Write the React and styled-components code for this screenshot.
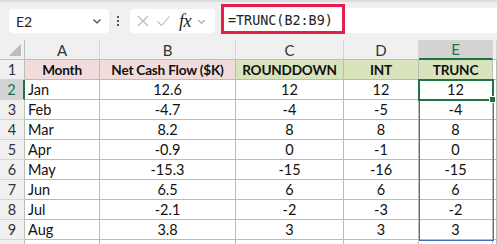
import React from 'react';
import styled, { createGlobalStyle, css } from 'styled-components';

const GlobalStyle = createGlobalStyle`
  body {
    margin: 0;
    background: #fff;
    font-family: Lato, "Liberation Sans", sans-serif;
  }
`;

const COLS = [25, 75, 136, 108, 75, 74, 4];
const GRID_LINE = '#bababa';

const rows = [
  ['Jan', '12.6', '12', '12', '12'],
  ['Feb', '-4.7', '-4', '-5', '-4'],
  ['Mar', '8.2', '8', '8', '8'],
  ['Apr', '-0.9', '0', '-1', '0'],
  ['May', '-15.3', '-15', '-16', '-15'],
  ['Jun', '6.5', '6', '6', '6'],
  ['Jul', '-2.1', '-2', '-3', '-2'],
  ['Aug', '3.8', '3', '3', '3'],
];

const headers = [
  { text: 'Month', tone: 'pink' },
  { text: 'Net Cash Flow ($K)', tone: 'pink' },
  { text: 'ROUNDDOWN', tone: 'green' },
  { text: 'INT', tone: 'green' },
  { text: 'TRUNC', tone: 'green' },
];

const Sheet = styled.div`
  position: relative;
  width: 497px;
  height: 244px;
  overflow: hidden;
  background: #fff;
`;

const FormulaBar = styled.div`
  display: flex;
  align-items: flex-start;
  height: 40px;
  box-sizing: border-box;
  padding-top: 7px;
  background: #f0f0f0;
  border-top: 2px solid #dcdcdc;
`;

const NameBox = styled.div`
  display: flex;
  align-items: center;
  justify-content: space-between;
  width: 100px;
  height: 24px;
  box-sizing: border-box;
  margin-left: 9px;
  padding: 0 7px 0 7px;
  background: #fff;
  border-radius: 4px;
  font-size: 14px;
  color: #222;
`;

const Dots = styled.div`
  display: flex;
  flex-direction: column;
  justify-content: center;
  gap: 2px;
  width: 4px;
  height: 24px;
  margin-left: 8px;

  span {
    width: 2px;
    height: 2px;
    background: #555;
  }
`;

const FxBox = styled.div`
  display: flex;
  align-items: center;
  gap: 6px;
  width: 85px;
  height: 24px;
  box-sizing: border-box;
  margin-left: 9px;
  padding-left: 6px;
  background: #fff;
  border-radius: 4px;
`;

const FxLabel = styled.span`
  font-family: "Liberation Serif", serif;
  font-style: italic;
  font-size: 18px;
  color: #222;
  margin-left: 2px;
  letter-spacing: -0.5px;
`;

const FormulaInput = styled.div`
  flex: 1;
  display: flex;
  align-items: center;
  height: 25px;
  margin-top: -1px;
  margin-left: 7px;
  padding-left: 6px;
  background: #fff;
  font-family: "DejaVu Sans Mono", monospace;
  font-size: 13.4px;
  color: #222;
`;

const Callout = styled.div`
  position: absolute;
  left: 221px;
  top: 4px;
  width: 124px;
  height: 30px;
  box-sizing: border-box;
  border: 3px solid #e3204b;
`;

const Grid = styled.div`
  position: relative;
  display: grid;
  grid-template-columns: ${COLS.map((c) => `${c}px`).join(' ')};
  grid-auto-rows: 20px;
`;

const Cell = styled.div`
  display: flex;
  align-items: center;
  justify-content: ${(p) => (p.$left ? 'flex-start' : 'center')};
  padding-left: ${(p) => (p.$left ? '3px' : '0')};
  box-sizing: border-box;
  border-right: 1px solid ${GRID_LINE};
  border-bottom: 1px solid ${GRID_LINE};
  font-size: 14.5px;
  color: #111;
  white-space: nowrap;
  ${(p) => p.$bold && css`
    font-weight: 700;
    font-size: 13.6px;
    letter-spacing: -0.2px;
  `}
  ${(p) => p.$tone === 'pink' && css`background: #f2dcdb;`}
  ${(p) => p.$tone === 'green' && css`background: #d8e4bc;`}
`;

const ColHead = styled.div`
  display: flex;
  align-items: center;
  justify-content: center;
  box-sizing: border-box;
  background: ${(p) => (p.$active ? '#d3d3d3' : '#f0f0f0')};
  border-right: 1px solid #d4d4d4;
  border-bottom: ${(p) => (p.$active ? '2px solid #217346' : '1px solid #bdbdbd')};
  font-size: 15px;
  color: ${(p) => (p.$active ? '#217346' : '#333')};
`;

const Corner = styled.div`
  position: relative;
  background: #f0f0f0;
  border-right: 1px solid #bdbdbd;
  border-bottom: 1px solid #bdbdbd;
  box-sizing: border-box;

  &::after {
    content: '';
    position: absolute;
    right: 3px;
    bottom: 3px;
    border-left: 12px solid transparent;
    border-bottom: 12px solid #bcbcbc;
  }
`;

const RowHead = styled.div`
  display: flex;
  align-items: center;
  justify-content: center;
  box-sizing: border-box;
  background: ${(p) => (p.$active ? '#d3d3d3' : '#f0f0f0')};
  border-right: ${(p) => (p.$active ? '2px solid #217346' : '1px solid #bdbdbd')};
  border-bottom: 1px solid #d4d4d4;
  font-size: 14.5px;
  color: ${(p) => (p.$active ? '#217346' : '#333')};
`;

const RangeOutline = styled.div`
  position: absolute;
  left: 419px;
  top: 40px;
  width: 75px;
  height: 161px;
  box-sizing: border-box;
  border: 1px solid #3c6ec4;
  pointer-events: none;
`;

const ActiveCell = styled.div`
  position: absolute;
  left: 418px;
  top: 39px;
  width: 76px;
  height: 22px;
  box-sizing: border-box;
  border: 2px solid #217346;

  &::after {
    content: '';
    position: absolute;
    right: -4px;
    bottom: -4px;
    width: 5px;
    height: 5px;
    background: #217346;
    border: 1px solid #fff;
  }
`;

const Chevron = ({ size = 10, color = '#444' }) => (
  <svg width={size} height={size} viewBox="0 0 10 10">
    <path d="M1.5 3.5 L5 7 L8.5 3.5" fill="none" stroke={color} strokeWidth="1.2" />
  </svg>
);

const CrossIcon = () => (
  <svg width="14" height="14" viewBox="0 0 14 14">
    <path d="M2 2 L12 12 M12 2 L2 12" stroke="#b8b8b8" strokeWidth="1.1" fill="none" />
  </svg>
);

const CheckIcon = () => (
  <svg width="15" height="14" viewBox="0 0 15 14">
    <path d="M1.5 7.5 L5.5 11.5 L13.5 2.5" stroke="#b8b8b8" strokeWidth="1.1" fill="none" />
  </svg>
);

const letters = ['A', 'B', 'C', 'D', 'E'];

export default function App() {
  return (
    <Sheet>
      <GlobalStyle />
      <FormulaBar>
        <NameBox>
          <span>E2</span>
          <Chevron />
        </NameBox>
        <Dots>
          <span />
          <span />
          <span />
        </Dots>
        <FxBox>
          <CrossIcon />
          <CheckIcon />
          <FxLabel>fx</FxLabel>
          <Chevron size={9} color="#999" />
        </FxBox>
        <FormulaInput>=TRUNC(B2:B9)</FormulaInput>
      </FormulaBar>
      <Callout />
      <Grid>
        <Corner />
        {letters.map((l) => (
          <ColHead key={l} $active={l === 'E'}>
            {l}
          </ColHead>
        ))}
        <ColHead />

        <RowHead>1</RowHead>
        {headers.map((h) => (
          <Cell key={h.text} $bold $tone={h.tone}>
            {h.text}
          </Cell>
        ))}
        <Cell />

        {rows.map((r, i) => (
          <React.Fragment key={r[0]}>
            <RowHead $active={i === 0}>{i + 2}</RowHead>
            {r.map((v, j) => (
              <Cell key={j} $left={j === 0}>
                {v}
              </Cell>
            ))}
            <Cell />
          </React.Fragment>
        ))}

        <RowHead />
        {letters.map((l) => (
          <Cell key={l} />
        ))}
        <Cell />

        <RangeOutline />
        <ActiveCell />
      </Grid>
    </Sheet>
  );
}
